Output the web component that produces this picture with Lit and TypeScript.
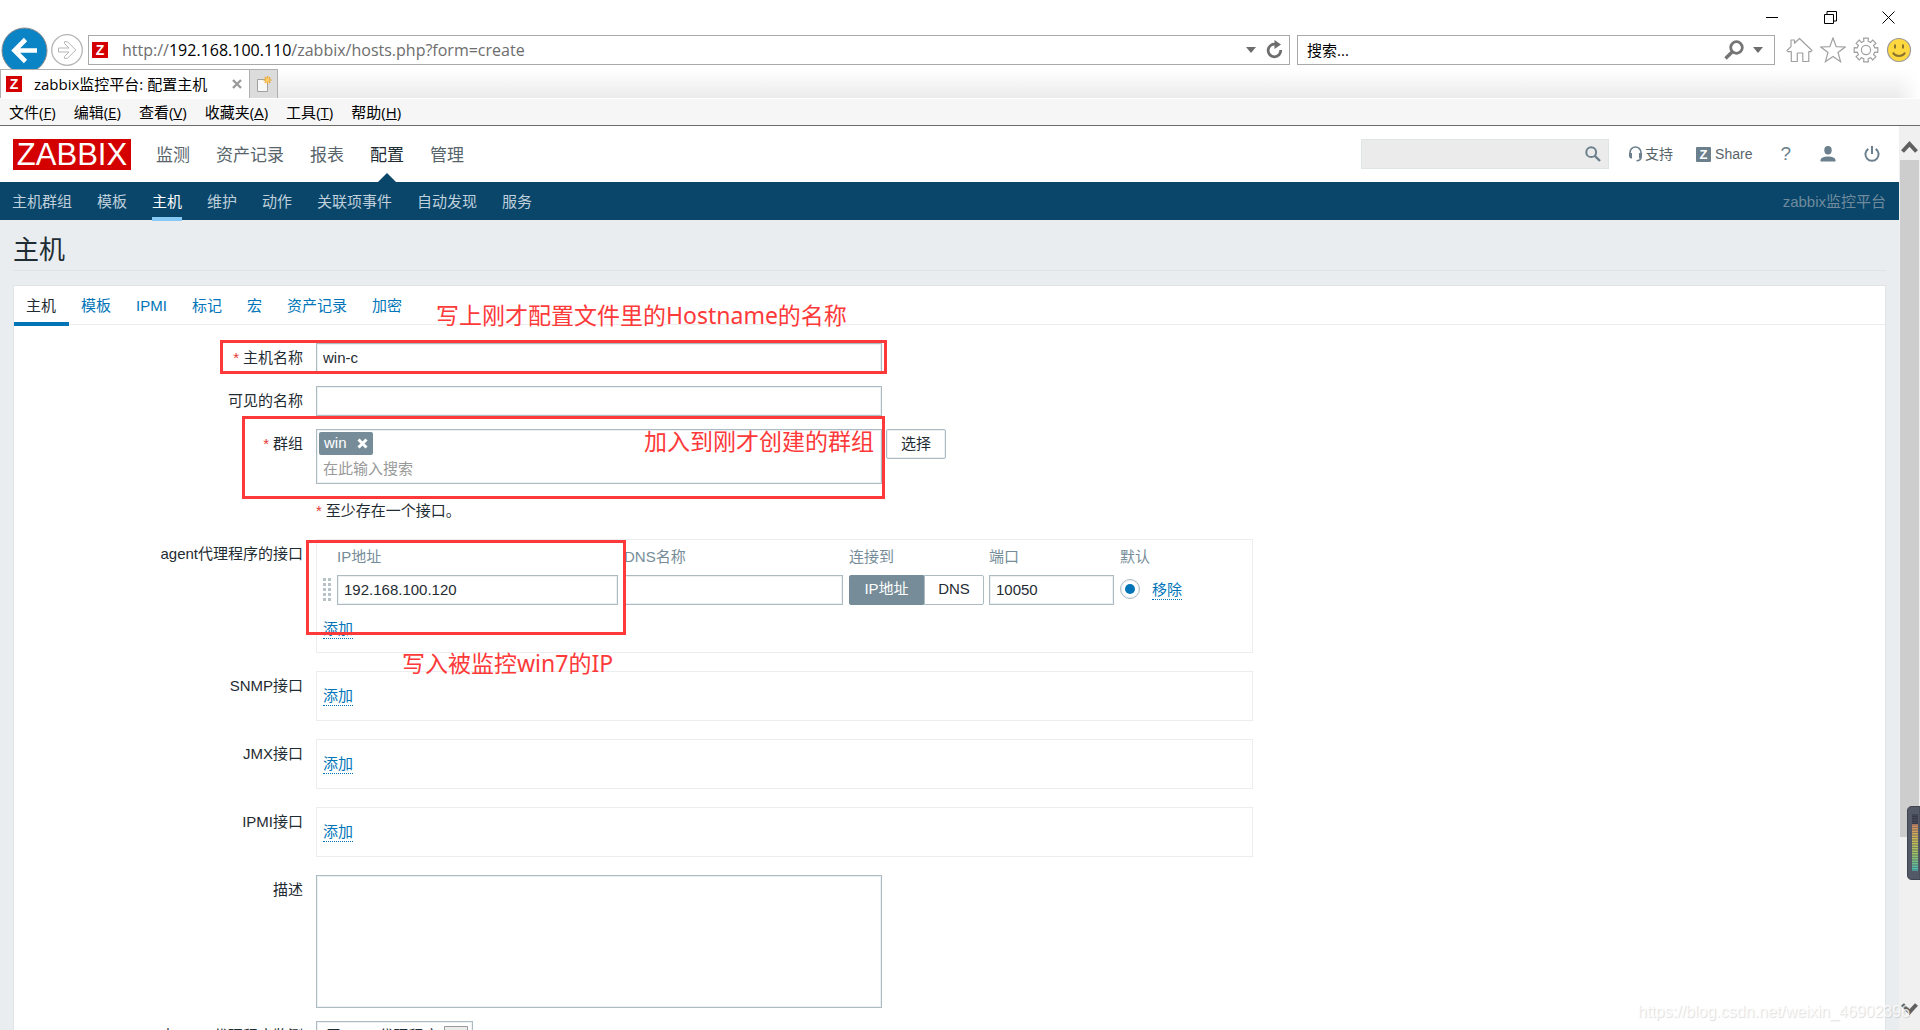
import { LitElement, html, css, svg, nothing } from "lit";
import { customElement, property, state } from "lit/decorators.js";
import { classMap } from "lit/directives/class-map.js";

const dropArrow = html`<svg width="10" height="6" viewBox="0 0 10 6" aria-hidden="true"><path d="M0 0h10L5 6z" fill="#6d6d6d" /></svg>`;

@customElement("browser-chrome")
export class BrowserChrome extends LitElement {
  static styles = css`
    :host {
      display: block;
      background: #fff;
      color: #000;
      font: 15px/20px "Open Sans", "Noto Sans CJK SC", sans-serif;
    }
    button {
      display: flex;
      align-items: center;
      justify-content: center;
      padding: 0;
      border: 0;
      background: none;
      font: inherit;
      color: inherit;
    }
    svg {
      display: block;
      flex: none;
    }
    .window-controls {
      display: flex;
      justify-content: flex-end;
      gap: 45px;
      height: 34px;
      padding-right: 25px;
      align-items: center;
    }
    .toolbar {
      display: flex;
      align-items: center;
      height: 30px;
      padding: 1px 8px 4px 1px;
    }
    .forward {
      margin: 0 5px 0 3px;
    }
    .box {
      display: flex;
      align-items: center;
      box-sizing: border-box;
      height: 30px;
      border: 1px solid #a9a9a9;
      background: #fff;
    }
    .address {
      flex: 1;
      gap: 14px;
      padding: 0 6px 0 3px;
      margin-right: 7px;
    }
    .url {
      flex: 1;
      font-size: 16px;
      color: #6d6d6d;
      white-space: nowrap;
    }
    .url b {
      font-weight: normal;
      color: #000;
    }
    .address button + button {
      margin-left: -4px;
    }
    .search {
      width: 478px;
      padding: 0 11px 0 9px;
      gap: 9px;
      margin-right: 11px;
    }
    .search input {
      flex: 1;
      min-width: 0;
      padding: 0;
      border: 0;
      outline: 0;
      font: inherit;
      color: #000;
      background: none;
    }
    .search input::placeholder {
      color: #000;
      opacity: 1;
    }
    .tools {
      display: flex;
      align-items: center;
      gap: 7px;
    }
    .favicon {
      flex: none;
      width: 16px;
      height: 16px;
      background: #d40000;
      color: #fff;
      font: bold 14px/16px "Liberation Sans", sans-serif;
      text-align: center;
    }
    .tabs {
      position: relative;
      display: flex;
      height: 29px;
      background: linear-gradient(to bottom, #fff, #ebebeb);
      border-bottom: 1px solid #fff;
    }
    .tabs::after {
      content: "";
      flex: 1;
      background: linear-gradient(to left, #fff, transparent 24px);
    }
    .tab {
      display: flex;
      align-items: center;
      box-sizing: border-box;
      width: 250px;
      padding: 0 7px 0 5px;
      border: 1px solid #b0b0b0;
      border-bottom: 0;
      background: #fff;
    }
    .tab-title {
      flex: 1;
      margin-left: 12px;
      white-space: nowrap;
    }
    .new-tab {
      box-sizing: border-box;
      width: 28px;
      border: 1px solid #b0b0b0;
      border-width: 1px 1px 0 0;
      background: #dcdcdc;
    }
    .menu {
      display: flex;
      gap: 18px;
      height: 26px;
      padding-left: 9px;
      background: #f6f6f6;
      border-bottom: 1px solid #6b6b6b;
    }
  `;

  private menu = [
    ["文件", "F"],
    ["编辑", "E"],
    ["查看", "V"],
    ["收藏夹", "A"],
    ["工具", "T"],
    ["帮助", "H"],
  ];

  render() {
    return html`
      <div class="window-controls">
        <button aria-label="最小化"><svg width="13" height="13" viewBox="0 0 13 13"><path d="M0 6.500h12" stroke="#000" /></svg></button>
        <button aria-label="还原"><svg width="13" height="13" viewBox="0 0 13 13" fill="none" stroke="#000"><path d="M.5 3.500h9v9h-9zM3 3V.5h9.500V10H10" /></svg></button>
        <button aria-label="关闭"><svg width="13" height="13" viewBox="0 0 13 13"><path d="M.5.5l12 12M12.500.5l-12 12" stroke="#000" /></svg></button>
      </div>
      <div class="toolbar">
        <button aria-label="后退">
          <svg width="47" height="47" viewBox="0 0 47 47">
            <circle cx="23.500" cy="23.500" r="22.500" fill="#0a84c4" stroke="#8c8c8c" />
            <path d="M36 23.500H14M24.500 12.500l-11 11 11 11" fill="none" stroke="#fff" stroke-width="4.600" />
          </svg>
        </button>
        <button class="forward" aria-label="前进">
          <svg width="32" height="32" viewBox="0 0 32 32" fill="none" stroke="#b5b5b5">
            <circle cx="16" cy="16" r="15.300" stroke-width="1.300" />
            <path d="M7.500 14h10.500l-4.500-4.500V7.700h3l8.300 8.300-8.300 8.300h-3v-1.800l4.500-4.500H7.500z" />
          </svg>
        </button>
        <div class="box address">
          <span class="favicon">Z</span>
          <span class="url">http://<b>192.168.100.110</b>/zabbix/hosts.php?form=create</span>
          <button aria-label="地址列表">${dropArrow}</button>
          <button aria-label="刷新">
            <svg width="17" height="20" viewBox="0 0 17 20">
              <path d="M9.500 4.300A6.300 6.300 0 1 0 14.700 10" fill="none" stroke="#6d6d6d" stroke-width="2.800" />
              <path d="M8.500 0v9l6.500-4.500z" fill="#6d6d6d" />
            </svg>
          </button>
        </div>
        <div class="box search">
          <input type="text" aria-label="搜索" placeholder="搜索..." />
          <button aria-label="搜索">
            <svg width="20" height="20" viewBox="0 0 20 20" fill="none" stroke="#757575">
              <circle cx="12.500" cy="7.500" r="5.800" stroke-width="2.800" />
              <path d="M8.300 11.700L1.500 18.500" stroke-width="3.400" />
            </svg>
          </button>
          <button aria-label="搜索选项">${dropArrow}</button>
        </div>
        <div class="tools">
          <button aria-label="主页">
            <svg width="27" height="26" viewBox="0 0 27 26" fill="#fff" stroke="#a0a0a0" stroke-width="1.200">
              <path d="M1 13.500L5 9.600V3h3.500v3.200L13.500 1.500 26 13.500l-1.200 1.200h-2V24.500h-6V16h-5.500v8.500h-6V14.700H2z" stroke-linejoin="round" />
            </svg>
          </button>
          <button aria-label="收藏夹">
            <svg width="26" height="26" viewBox="0 0 26 26" fill="#fff" stroke="#a0a0a0" stroke-width="1.200">
              <path d="M13 1l3.200 8.700 9 .3-7.200 5.500 2.600 9.200L13 19.500l-7.600 5.200L8 15.500.800 10l9-.3z" />
            </svg>
          </button>
          <button aria-label="工具">
            <svg width="26" height="26" viewBox="0 0 26 26" fill="#fff" stroke="#a0a0a0" stroke-width="1.200">
              ${this.gear()}
              <circle cx="13" cy="13" r="4.600" />
            </svg>
          </button>
          <button aria-label="反馈">
            <svg width="26" height="26" viewBox="0 0 26 26">
              <circle cx="13" cy="13" r="11.500" fill="#ffd83f" stroke="#9a9a9a" stroke-width="1.200" />
              <path d="M9 7.500v4M17 7.500v4" stroke="#8a7430" stroke-width="2" />
              <path d="M7 15.500c2 4.500 10 4.500 12 0" fill="none" stroke="#8a7430" stroke-width="2" />
            </svg>
          </button>
        </div>
      </div>
      <div class="tabs">
        <div class="tab">
          <span class="favicon">Z</span>
          <span class="tab-title">zabbix监控平台: 配置主机</span>
          <button aria-label="关闭标签页"><svg width="10" height="10" viewBox="0 0 10 10"><path d="M1 1l8 8M9 1L1 9" stroke="#9a9a9a" stroke-width="2.400" /></svg></button>
        </div>
        <button class="new-tab" aria-label="新建标签页">
          <svg width="16" height="17" viewBox="0 0 16 17">
            <path d="M1.500 3.500h10v12h-10z" fill="#f8f8f8" stroke="#a0a0a0" />
            <path d="M11.500 0v8M7.500 4h8M8.700 1.200l5.600 5.600M14.300 1.200L8.700 6.800" stroke="#f0a830" stroke-width="1.400" />
            <circle cx="11.500" cy="4" r="2" fill="#ffd070" />
          </svg>
        </button>
      </div>
      <nav class="menu">
        ${this.menu.map(([label, key]) => html`<button><span>${label}(<u>${key}</u>)</span></button>`)}
      </nav>
    `;
  }

  private gear() {
    const points: string[] = [];
    for (let i = 0; i < 8; i++) {
      for (const [offset, radius] of [[-0.23, 9], [-0.2, 12], [0.2, 12], [0.23, 9]]) {
        const a = (i * Math.PI) / 4 + offset;
        points.push(`${(13 + radius * Math.cos(a)).toFixed(1)},${(13 + radius * Math.sin(a)).toFixed(1)}`);
      }
    }
    return svg`<polygon points=${points.join(" ")} stroke-linejoin="round" />`;
  }
}

@customElement("zabbix-header")
export class ZabbixHeader extends LitElement {
  static styles = css`
    :host {
      display: block;
      font: 15px/20px "Liberation Sans", "Noto Sans CJK SC", sans-serif;
    }
    a {
      color: inherit;
      text-decoration: none;
      white-space: nowrap;
    }
    svg {
      display: block;
      flex: none;
    }
    .top {
      display: flex;
      align-items: center;
      height: 56px;
      padding: 0 19px 0 13px;
      background: #fff;
      color: #57646b;
    }
    .logo {
      width: 118px;
      height: 31px;
      margin-right: 25px;
      background: #d40000;
      color: #fff;
      font-size: 31px;
      line-height: 32px;
      text-align: center;
    }
    .main-nav {
      display: flex;
      flex: 1;
      gap: 26px;
      height: 56px;
      font-size: 17px;
      line-height: 59px;
    }
    .main-nav .active {
      position: relative;
      color: #1f2c33;
    }
    .main-nav .active::after {
      content: "";
      position: absolute;
      left: 50%;
      bottom: 0;
      margin-left: -9px;
      border: 9px solid transparent;
      border-top: 0;
      border-bottom-color: #0a466a;
    }
    .search {
      display: flex;
      align-items: center;
      box-sizing: border-box;
      width: 248px;
      height: 30px;
      padding: 0 7px;
      border: 1px solid #dfe4e7;
      background: #ebebeb;
    }
    .search input {
      flex: 1;
      min-width: 0;
      border: 0;
      outline: 0;
      background: none;
    }
    .search button {
      padding: 0;
      border: 0;
      background: none;
    }
    .links {
      display: flex;
      align-items: center;
      font-size: 14px;
    }
    .links a {
      display: flex;
      align-items: center;
    }
    .support {
      gap: 2px;
      margin-left: 19px;
    }
    .share {
      gap: 4px;
      margin-left: 23px;
    }
    .share-icon {
      width: 15px;
      height: 15px;
      border-radius: 1px;
      background: #6b808c;
      color: #fff;
      font: bold 13px/15px "Liberation Sans", sans-serif;
      text-align: center;
    }
    .help {
      margin-left: 28px;
      color: #6b808c;
      font-size: 19px;
    }
    .user {
      margin-left: 29px;
    }
    .power {
      margin-left: 28px;
    }
    .sub {
      display: flex;
      gap: 25px;
      height: 38px;
      padding: 0 13px 0 12px;
      line-height: 40px;
      background: #0a466a;
      color: #bfd0dc;
    }
    .sub .active {
      height: 35px;
      border-bottom: 4px solid #86c9f7;
      color: #fff;
    }
    .server {
      margin-left: auto;
      color: #6f8b9d;
    }
  `;

  render() {
    const main = ["监测", "资产记录", "报表", "配置", "管理"];
    const sub = ["主机群组", "模板", "主机", "维护", "动作", "关联项事件", "自动发现", "服务"];
    return html`
      <header class="top">
        <a class="logo" href="#">ZABBIX</a>
        <nav class="main-nav">${main.map((t) => html`<a href="#" class=${classMap({ active: t === "配置" })}>${t}</a>`)}</nav>
        <div class="search">
          <input type="text" aria-label="搜索" />
          <button aria-label="搜索">
            <svg width="16" height="16" viewBox="0 0 16 16" fill="none" stroke="#6b808c"><circle cx="6.200" cy="6.200" r="4.900" stroke-width="2" /><path d="M9.800 9.800l5.200 5.200" stroke-width="2.400" /></svg>
          </button>
        </div>
        <div class="links">
          <a class="support" href="#">
            <svg width="15" height="16" viewBox="0 0 15 16"><path d="M2 10V6.500a5.500 5.500 0 0 1 11 0V11q0 3.500-4.500 3.800" fill="none" stroke="#6b808c" stroke-width="1.600" /><path d="M1 7h3v5.500H3Q1 12 1 10zM11 7h3v3q0 2-2 2.500h-1z" fill="#6b808c" /></svg>
            支持
          </a>
          <a class="share" href="#"><span class="share-icon">Z</span>Share</a>
          <a class="help" href="#">?</a>
          <a class="user" href="#" aria-label="用户资料"><svg width="16" height="16" viewBox="0 0 16 16" fill="#6b808c"><ellipse cx="8" cy="4.300" rx="3.700" ry="4.200" /><path d="M.5 15.500v-1.500q.5-3.500 7.500-3.500t7.500 3.500v1.500z" /></svg></a>
          <a class="power" href="#" aria-label="退出"><svg width="16" height="16" viewBox="0 0 16 16" fill="none" stroke="#6b808c" stroke-width="2"><path d="M4.300 2.800a6.600 6.600 0 1 0 7.400 0M8 0v8" /></svg></a>
        </div>
      </header>
      <nav class="sub">
        ${sub.map((t) => html`<a href="#" class=${classMap({ active: t === "主机" })}>${t}</a>`)}
        <span class="server">zabbix监控平台</span>
      </nav>
    `;
  }
}

@customElement("host-form")
export class HostForm extends LitElement {
  @state() private connectTo = "IP地址";

  static styles = css`
    :host {
      display: block;
      padding: 0 13px;
      color: #1f2c33;
      font: 15px/20px "Liberation Sans", "Noto Sans CJK SC", sans-serif;
    }
    h1 {
      margin: 0 0 14px;
      border-bottom: 1px solid #dfe4e7;
      font-size: 26px;
      font-weight: normal;
      line-height: 60px;
      height: 50px;
    }
    a {
      color: #0275b8;
      text-decoration: none;
    }
    input,
    textarea,
    select,
    .groups {
      box-sizing: border-box;
      border: 1px solid #acbbc2;
      border-radius: 0;
      outline: 0;
      background: #fff;
      color: inherit;
      font: inherit;
      box-shadow: inset 0 0 0 1px #eef1f3;
    }
    input {
      height: 30px;
      padding: 0 6px 2px;
    }
    button {
      padding: 0;
      border: 1px solid #acbbc2;
      border-radius: 2px;
      background: #fff;
      color: inherit;
      font: inherit;
    }
    .panel {
      position: relative;
      border: 1px solid #dfe4e7;
      background: #fff;
    }
    .tabs {
      display: flex;
      height: 38px;
      border-bottom: 1px solid #ebeef0;
    }
    .tabs a {
      height: 36px;
      padding: 0 13px 0 12px;
      line-height: 40px;
    }
    .tabs .active {
      border-bottom: 4px solid #0275b8;
      color: #1f2c33;
    }
    .rows {
      display: flex;
      flex-direction: column;
      gap: 13px;
      padding: 18px 0 12px;
    }
    .row {
      display: grid;
      grid-template-columns: 289px minmax(0, 1fr);
      column-gap: 13px;
      align-items: start;
    }
    .label {
      line-height: 30px;
      text-align: right;
    }
    .required::before {
      content: "*";
      margin-right: 4px;
      color: #e33734;
    }
    .wide {
      display: block;
      width: 566px;
    }
    .field {
      display: flex;
      gap: 4px;
      align-items: flex-start;
    }
    .groups {
      height: 55px;
      padding: 2px;
    }
    .tag {
      display: flex;
      align-items: center;
      width: 54px;
      height: 23px;
      box-sizing: border-box;
      justify-content: space-between;
      padding: 0 5px 1px 5px;
      border-radius: 2px;
      background: #768d99;
      color: #fff;
    }
    .tag button {
      border: 0;
      background: none;
    }
    .tag svg {
      display: block;
    }
    .groups input {
      width: 100%;
      height: 26px;
      padding: 0 4px;
      border: 0;
      box-shadow: none;
      background: none;
    }
    .groups input::placeholder {
      color: #999;
      opacity: 1;
    }
    .select {
      width: 60px;
      height: 30px;
      box-shadow: inset 0 0 0 1px #eef1f3;
    }
    .note {
      height: 29px;
      line-height: 28px;
    }
    .interface {
      margin-bottom: 5px;
    }
    .box {
      box-sizing: border-box;
      width: 937px;
      min-height: 50px;
      padding: 0 6px 13px;
      border: 1px solid #ebeef0;
    }
    .link {
      display: inline-block;
      padding: 0;
      border: 0;
      border-bottom: 1px dotted #0275b8;
      border-radius: 0;
      background: none;
      color: #0275b8;
      line-height: 18px;
    }
    .add {
      display: block;
      margin-top: 15px;
    }
    table {
      border-collapse: collapse;
    }
    th {
      height: 35px;
      padding: 0;
      color: #768d99;
      font-weight: normal;
      line-height: 33px;
      text-align: left;
      vertical-align: top;
    }
    td {
      height: 30px;
      padding: 0 6px 0 0;
      vertical-align: middle;
    }
    td svg,
    td input {
      display: block;
    }
    .handle {
      width: 8px;
    }
    .ip {
      width: 281px;
    }
    .dns {
      width: 219px;
    }
    .segments {
      display: flex;
      width: 134px;
    }
    .segments button {
      flex: none;
      width: 60px;
      height: 30px;
      padding-bottom: 2px;
      border-radius: 0 2px 2px 0;
    }
    .segments .first {
      width: 75px;
      border-radius: 2px 0 0 2px;
    }
    .segments .on {
      border-color: #768d99;
      background: #768d99;
      color: #fff;
    }
    .port {
      width: 125px;
    }
    .radio {
      display: grid;
      width: 20px;
      height: 20px;
      margin: 0 6px 2px 0;
      padding: 4px;
      border-radius: 50%;
      appearance: none;
      background: #0275b8 content-box;
      background-clip: content-box;
      border: 1px solid #acbbc2;
    }
    textarea {
      height: 133px;
      resize: none;
    }
    .proxy {
      position: relative;
      width: 157px;
    }
    .proxy select {
      display: block;
      width: 100%;
      height: 30px;
      padding: 0 4px;
      appearance: none;
    }
    .proxy svg {
      position: absolute;
      top: 5px;
      right: 5px;
      pointer-events: none;
    }
    .mark {
      position: absolute;
      box-sizing: border-box;
      border: 3px solid #fd3939;
      pointer-events: none;
    }
    .mark-name {
      left: 206px;
      top: 54px;
      width: 667px;
      height: 34px;
    }
    .mark-group {
      left: 228px;
      top: 130px;
      width: 643px;
      height: 83px;
    }
    .mark-ip {
      left: 292px;
      top: 254px;
      width: 320px;
      height: 95px;
    }
    .hint {
      position: absolute;
      color: #fd3939;
      font: 23px/30px "Noto Sans", "Noto Sans CJK SC", sans-serif;
      white-space: nowrap;
      pointer-events: none;
    }
    .hint-name {
      left: 422px;
      top: 14px;
    }
    .hint-group {
      left: 630px;
      top: 140px;
    }
    .hint-ip {
      left: 388px;
      top: 362px;
    }
  `;

  private segment(name: string, first: boolean) {
    return html`<button
      class=${classMap({ first, on: this.connectTo === name })}
      aria-pressed=${this.connectTo === name}
      @click=${() => (this.connectTo = name)}
    >${name}</button>`;
  }

  private interfaceRow(label: string, content: unknown = nothing) {
    return html`
      <div class="row interface">
        <span class="label">${label}</span>
        <div class="box">${content}<button class="link add">添加</button></div>
      </div>
    `;
  }

  private agentTable() {
    return html`
      <table>
        <thead>
          <tr><th></th><th>IP地址</th><th>DNS名称</th><th>连接到</th><th>端口</th><th colspan="2">默认</th></tr>
        </thead>
        <tbody>
          <tr>
            <td>
              <svg class="handle" width="8" height="25" viewBox="0 0 8 25" fill="#b8c3c9">
                ${[0, 5, 10, 15, 20].map((y) => svg`<path d="M0 ${y}h3v3h-3zM5 ${y}h3v3h-3z" />`)}
              </svg>
            </td>
            <td><input class="ip" type="text" aria-label="IP地址" .value=${"192.168.100.120"} /></td>
            <td><input class="dns" type="text" aria-label="DNS名称" /></td>
            <td><div class="segments">${this.segment("IP地址", true)}${this.segment("DNS", false)}</div></td>
            <td><input class="port" type="text" aria-label="端口" .value=${"10050"} /></td>
            <td><input class="radio" type="radio" aria-label="默认" checked /></td>
            <td><button class="link">移除</button></td>
          </tr>
        </tbody>
      </table>
    `;
  }

  render() {
    const tabs = ["主机", "模板", "IPMI", "标记", "宏", "资产记录", "加密"];
    return html`
      <h1>主机</h1>
      <section class="panel">
        <nav class="tabs">${tabs.map((t, i) => html`<a href="#" class=${classMap({ active: i === 0 })}>${t}</a>`)}</nav>
        <div class="rows">
          <div class="row">
            <label class="label required" for="host">主机名称</label>
            <input class="wide" id="host" type="text" .value=${"win-c"} />
          </div>
          <div class="row">
            <label class="label" for="visible">可见的名称</label>
            <input class="wide" id="visible" type="text" />
          </div>
          <div class="row">
            <label class="label required" for="groups">群组</label>
            <div class="field">
              <div class="groups wide">
                <span class="tag">win<button aria-label="移除 win"><svg width="11" height="11" viewBox="0 0 11 11"><path d="M1.500 1.500l8 8M9.500 1.500l-8 8" stroke="#fff" stroke-width="3" /></svg></button></span>
                <input id="groups" type="text" placeholder="在此输入搜索" />
              </div>
              <button class="select">选择</button>
            </div>
          </div>
          <div class="row">
            <span></span>
            <span class="note required">至少存在一个接口。</span>
          </div>
          ${this.interfaceRow("agent代理程序的接口", this.agentTable())}
          ${this.interfaceRow("SNMP接口")}
          ${this.interfaceRow("JMX接口")}
          ${this.interfaceRow("IPMI接口")}
          <div class="row">
            <label class="label" for="description">描述</label>
            <textarea class="wide" id="description"></textarea>
          </div>
          <div class="row">
            <label class="label" for="proxy">由agent代理程序监测</label>
            <div class="proxy">
              <select id="proxy"><option>(无agent代理程序)</option></select>
              <svg width="24" height="21" viewBox="0 0 24 21"><path d="M.5.5h23v20H.5z" fill="#ececec" stroke="#9a9a9a" /><path d="M8 9h8l-4 4z" fill="#333" /></svg>
            </div>
          </div>
        </div>
        <div class="mark mark-name"></div>
        <div class="mark mark-group"></div>
        <div class="mark mark-ip"></div>
        <span class="hint hint-name">写上刚才配置文件里的Hostname的名称</span>
        <span class="hint hint-group">加入到刚才创建的群组</span>
        <span class="hint hint-ip">写入被监控win7的IP</span>
      </section>
    `;
  }
}

@customElement("level-meter")
export class LevelMeter extends LitElement {
  @property({ type: Number }) bars = 34;

  static styles = css`
    :host {
      display: block;
    }
    svg {
      display: block;
    }
  `;

  private colour(i: number) {
    if (i < 6) return "#333742";
    const stops = [[232, 145, 90], [222, 200, 80], [160, 210, 100], [72, 205, 185]];
    const t = ((i - 6) / (this.bars - 7)) * 3;
    const k = Math.min(2, Math.floor(t));
    const mix = stops[k].map((c, n) => Math.round(c + (stops[k + 1][n] - c) * (t - k)));
    return `rgb(${mix.join(",")})`;
  }

  render() {
    return html`
      <svg width="13" height="74" viewBox="0 0 13 74">
        <path d="M13 .5H5Q.5.500.5 5v64q0 4.500 4.500 4.500h8z" fill="#545968" stroke="#40444f" />
        ${Array.from({ length: this.bars }, (_, i) => {
          const y = 9 + i * 1.667;
          return svg`<path d="M5 ${y.toFixed(2)}h6" stroke=${this.colour(i)} stroke-width="1.100" />`;
        })}
      </svg>
    `;
  }
}

@customElement("app-root")
export class AppRoot extends LitElement {
  static styles = css`
    :host {
      position: relative;
      display: flex;
      flex-direction: column;
      height: 100vh;
      overflow: hidden;
      background: #fff;
    }
    .viewport {
      display: flex;
      flex: 1;
      min-height: 0;
    }
    .page {
      flex: 1;
      min-width: 0;
      overflow: hidden;
      background: #e9edf0;
    }
    .scrollbar {
      display: flex;
      flex-direction: column;
      align-items: center;
      width: 21px;
      background: #f0f0f0;
    }
    .scrollbar svg {
      flex: none;
      margin: 15px 0 7px;
    }
    .scrollbar .track + svg {
      margin: 7px 0 15px;
    }
    .track {
      flex: 1;
      width: 19px;
    }
    .thumb {
      height: 81%;
      background: #cdcdcd;
    }
    .meter {
      position: absolute;
      right: 0;
      top: 806px;
    }
    .watermark {
      position: absolute;
      right: 10px;
      bottom: 8px;
      color: rgba(255, 255, 255, 0.8);
      font: 16px/20px "Liberation Sans", sans-serif;
      text-shadow: 1px 1px 1px rgba(140, 140, 140, 0.3);
    }
  `;

  render() {
    return html`
      <browser-chrome></browser-chrome>
      <div class="viewport">
        <main class="page">
          <zabbix-header></zabbix-header>
          <host-form></host-form>
        </main>
        <div class="scrollbar" aria-hidden="true">
          <svg width="17" height="12" viewBox="0 0 17 12"><path d="M1.500 10.500l7-7.500 7 7.500" fill="none" stroke="#606060" stroke-width="4" /></svg>
          <div class="track"><div class="thumb"></div></div>
          <svg width="17" height="12" viewBox="0 0 17 12"><path d="M1.500 1.500l7 7.500 7-7.500" fill="none" stroke="#606060" stroke-width="4" /></svg>
        </div>
      </div>
      <level-meter class="meter"></level-meter>
      <span class="watermark">https://blog.csdn.net/weixin_46902396</span>
    `;
  }
}
